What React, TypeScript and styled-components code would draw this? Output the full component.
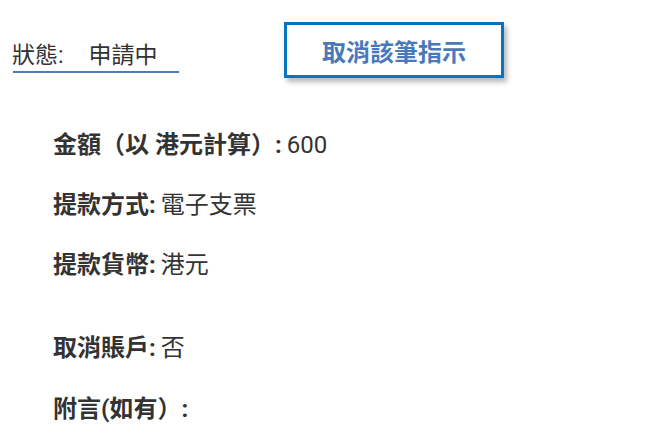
import styled, { createGlobalStyle } from 'styled-components';

const GlobalStyle = createGlobalStyle`
  body {
    margin: 0;
    background: #ffffff;
    font-family: Roboto, "Noto Sans CJK TC", sans-serif;
    color: #333333;
  }
`;

const rows = [
  { label: '金額（以 港元計算）:', value: '600', gap: 0 },
  { label: '提款方式:', value: '電子支票', gap: 60 },
  { label: '提款貨幣:', value: '港元', gap: 60 },
  { label: '取消賬戶:', value: '否', gap: 83 },
  { label: '附言(如有）:', value: '', gap: 61 },
];

export default function App() {
  return (
    <>
      <GlobalStyle />
      <Page>
        <Header>
          <StatusField>
            <StatusLabel>狀態:</StatusLabel>
            <StatusValue>申請中</StatusValue>
          </StatusField>
          <CancelButton>取消該筆指示</CancelButton>
        </Header>
        <Details>
          {rows.map((row) => (
            <Row key={row.label} $offset={row.gap}>
              <Label>{row.label}</Label>
              {row.value && <Value>{row.value}</Value>}
            </Row>
          ))}
        </Details>
      </Page>
    </>
  );
}

const Page = styled.div`
  display: flex;
  flex-direction: column;
  padding: 22px 0 0 12px;
`;

const Header = styled.div`
  display: flex;
  align-items: flex-start;
  gap: 105px;
`;

const StatusField = styled.div`
  display: flex;
  align-items: baseline;
  gap: 25px;
  width: 166px;
  height: 51px;
  box-sizing: border-box;
  padding-top: 14px;
  border-bottom: 2px solid #4a7dbb;
  margin-left: 1px;
  font-size: 23px;
  color: #333333;
`;

const StatusLabel = styled.span`
  margin-left: -1px;
`;

const StatusValue = styled.span``;

const CancelButton = styled.button`
  width: 220px;
  height: 56px;
  box-sizing: border-box;
  border: 3px solid #0a72c2;
  background: #ffffff;
  color: #4a79b9;
  font-family: Roboto, "Noto Sans CJK TC", sans-serif;
  font-size: 24px;
  font-weight: 700;
  box-shadow: 3px 4px 5px rgba(0, 0, 0, 0.28);
  cursor: pointer;
`;

const Details = styled.div`
  display: flex;
  flex-direction: column;
  padding: 52px 0 0 41px;
`;

const Row = styled.div<{ $offset: number }>`
  display: flex;
  align-items: baseline;
  gap: 5px;
  height: 30px;
  line-height: 30px;
  margin-top: ${(p) => (p.$offset ? p.$offset - 30 : 0)}px;
  font-size: 24px;
`;

const Label = styled.span`
  font-weight: 700;
  color: #333333;
`;

const Value = styled.span`
  color: #333333;
`;
